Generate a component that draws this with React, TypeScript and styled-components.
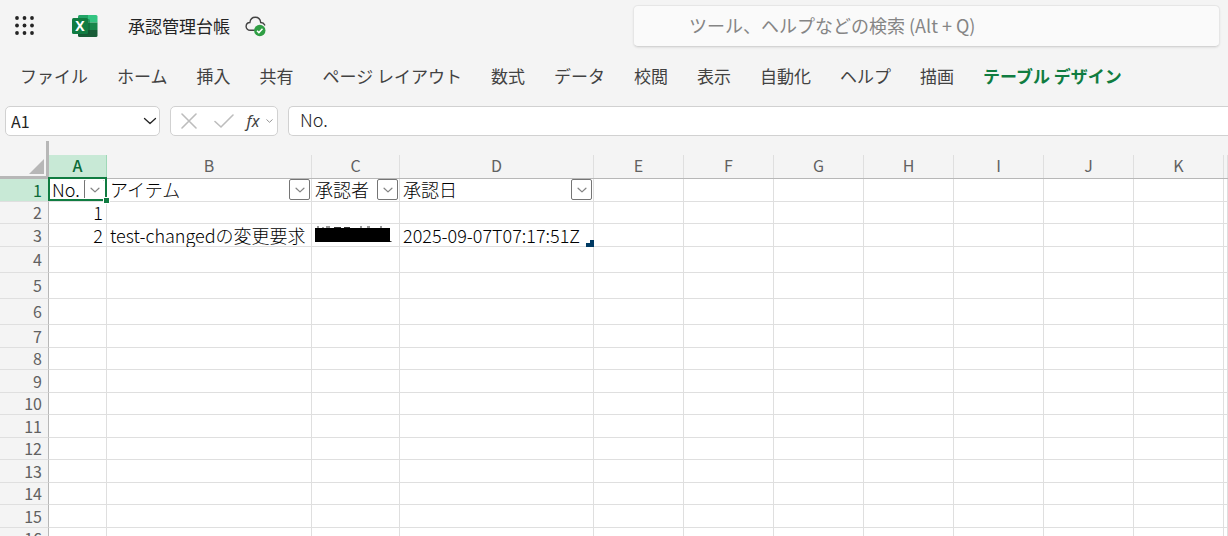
import React from "react";
import styled, { createGlobalStyle, css } from "styled-components";

const GREEN = "#107c41";
const HEAD_BG = "#f4f4f4";
const LINE = "#dfdfdf";
const DARK_LINE = "#b7b7b7";

const GlobalStyle = createGlobalStyle`
  *, *::before, *::after { box-sizing: border-box; }
  body {
    margin: 0;
    background: ${HEAD_BG};
    font-family: "Noto Sans CJK JP", "Noto Sans", sans-serif;
    color: #242424;
  }
  button, input {
    font: inherit;
    color: inherit;
    margin: 0;
    padding: 0;
    border: 0;
    background: none;
    outline: none;
  }
`;

const Page = styled.div`
  display: flex;
  flex-direction: column;
  height: 100vh;
  overflow: hidden;
`;

const TopBar = styled.header`
  display: grid;
  grid-template-columns: 633fr 595fr;
  align-items: center;
  padding-top: 5px;
`;

const Brand = styled.div`
  display: flex;
  align-items: center;
  padding-left: 14px;
`;

const IconButton = styled.button`
  display: flex;
  align-items: center;
  justify-content: center;
`;

const ExcelLogo = styled.svg`
  margin-left: 36px;
`;

const FileName = styled.h1`
  margin: 0 15px 0 30px;
  font-size: 17px;
  line-height: 24px;
  font-weight: 400;
`;

const Search = styled.div`
  margin-right: 8px;
  padding: 0 16px 0 55px;
  border: 1px solid #e6e6e6;
  border-bottom-color: #d4d4d4;
  border-radius: 5px;
  background: #fafafa;
  box-shadow: 0 1px 2px rgba(0, 0, 0, 0.08);

  input {
    display: block;
    width: 100%;
    height: 40px;
    padding-bottom: 2px;
    font-size: 18px;
  }
  input::placeholder {
    color: #858585;
    opacity: 1;
  }
`;

const Tabs = styled.nav`
  display: flex;
  gap: 29px;
  padding: 17px 0 18px 20px;
`;

const Tab = styled.button<{ $active?: boolean }>`
  flex: none;
  font-size: 17px;
  line-height: 24px;
  white-space: nowrap;
  color: ${(p) => (p.$active ? GREEN : "#424242")};
  font-weight: ${(p) => (p.$active ? 700 : 400)};
`;

const FormulaRow = styled.div`
  display: flex;
  padding-left: 5px;
`;

const box = css`
  display: flex;
  align-items: center;
  height: 30px;
  background: #fff;
  border: 1px solid #d1d1d1;
  border-radius: 5px;
`;

const NameBox = styled.div`
  ${box}
  width: 155px;
  padding: 0 2px 0 5px;
  input {
    flex: 1;
    min-width: 0;
    font-size: 16px;
    line-height: 24px;
  }
`;

const FormulaTools = styled.div`
  ${box}
  display: grid;
  grid-template-columns: 32px 37px 22px 11px;
  width: 108px;
  margin: 0 10px;
  padding: 0 2px;
`;

const FxLabel = styled.span`
  font-family: "Noto Sans", sans-serif;
  font-style: italic;
  font-size: 16px;
  line-height: 20px;
  color: #424242;
`;

const FormulaInput = styled.div`
  ${box}
  flex: 1;
  align-items: flex-start;
  border-right: 0;
  border-radius: 5px 0 0 5px;
  input {
    width: 100%;
    padding-left: 11px;
    font-size: 18px;
    font-weight: 300;
    line-height: 24px;
    height: 24px;
  }
`;

const SheetArea = styled.main`
  flex: 1;
  min-height: 0;
  padding-top: 5px;
  overflow: hidden;
`;

const Sheet = styled.table`
  width: 100%;
  table-layout: fixed;
  border-collapse: separate;
  border-spacing: 0;
`;

const Corner = styled.th`
  padding: 0;
  height: 38px;
  vertical-align: bottom;
  border-right: 3px solid ${DARK_LINE};
  border-bottom: 3px solid ${DARK_LINE};

  button {
    display: block;
    margin: 0 2px 2px auto;
  }
`;

const ColHead = styled.th<{ $active?: boolean }>`
  padding: 14px 0 0;
  border-bottom: 1px solid ${DARK_LINE};
  font-size: 16px;
  font-weight: ${(p) => (p.$active ? 500 : 400)};
  color: ${(p) => (p.$active ? "#0b6a37" : "#616161")};

  span {
    display: block;
    height: 23px;
    line-height: 21px;
    border-right: 1px solid ${(p) => (p.$active ? "#9fd8b7" : LINE)};
    background: ${(p) => (p.$active ? "#c8e9d6" : "transparent")};
  }
`;

const SheetRow = styled.tr<{ $height: number }>`
  height: ${(p) => p.$height}px;
`;

const RowHead = styled.th<{ $active?: boolean }>`
  padding: 0 6px 1px 0;
  text-align: right;
  font-size: 16px;
  line-height: 20px;
  font-weight: 400;
  color: ${(p) => (p.$active ? "#0b6a37" : "#616161")};
  background: ${(p) => (p.$active ? "#c8e9d6" : HEAD_BG)};
  border-right: 1px solid ${DARK_LINE};
  border-bottom: 1px solid ${LINE};
`;

const Cell = styled.td<{ $right?: boolean }>`
  position: relative;
  padding: 0 3px 1px;
  text-align: ${(p) => (p.$right ? "right" : "left")};
  font-size: 18px;
  line-height: 20px;
  font-weight: 300;
  color: #000;
  white-space: nowrap;
  background: #fff;
  border-right: 1px solid ${LINE};
  border-bottom: 1px solid ${LINE};
`;

const HeadingCell = styled(Cell)`
  padding: 0 1px 0 3px;
`;

const Heading = styled.div`
  display: flex;
  align-items: flex-start;
  justify-content: space-between;
  height: 22px;
`;

const FilterButton = styled.button`
  display: flex;
  align-items: center;
  justify-content: center;
  width: 21px;
  height: 21px;
  border: 1px solid #757575;
  border-radius: 2px;
  background: #fff;
`;

const Selection = styled.div`
  position: absolute;
  inset: -2px -1px 0 -1px;
  border: 2px solid ${GREEN};
  box-shadow: inset 0 0 0 1px #fff;
  pointer-events: none;

  &::after {
    content: "";
    position: absolute;
    right: -5px;
    bottom: -5px;
    width: 7px;
    height: 7px;
    border: 1px solid #fff;
    background: ${GREEN};
  }
`;

const SelectedHeadingCell = styled(HeadingCell)`
  z-index: 1;
`;

const TableCorner = styled.svg`
  position: absolute;
  right: -1px;
  bottom: -1px;
`;

const Redacted = styled.svg`
  display: block;
`;

type ChevronProps = { width: number; height: number; color: string };

const Chevron = ({ width, height, color }: ChevronProps) => (
  <svg width={width} height={height} viewBox="0 0 14 8" fill="none" aria-hidden="true">
    <path
      d="M1.5 1.5 7 6.600l5.500-5.100"
      stroke={color}
      strokeWidth={width > 10 ? 1.3 : 1.8}
      strokeLinecap="round"
      strokeLinejoin="round"
    />
  </svg>
);

const Waffle = () => (
  <svg width="22" height="22" viewBox="0 0 22 22" fill="#242424" aria-hidden="true">
    {[3, 10.5, 18].map((y) => [3, 10.5, 18].map((x) => <circle key={`${x}-${y}`} cx={x} cy={y} r="1.9" />))}
  </svg>
);

const CloudSaved = () => (
  <svg width="22" height="23" viewBox="0 0 22 23" fill="none" aria-hidden="true">
    <path
      d="M9.500 15.300H5.200A4 4 0 0 1 1.100 11.400a4 4 0 0 1 3.800-3.900C5.300 4.200 7.600 2.300 10.300 2.300s5 1.900 5.400 5.200c2 .1 3.400 1.100 4 2.500"
      stroke="#424242"
      strokeWidth="1.4"
      strokeLinecap="round"
    />
    <circle cx="14.800" cy="15.500" r="5.700" fill="#2f9e44" />
    <path d="m12 15.700 1.900 1.900 3.600-3.800" stroke="#fff" strokeWidth="1.5" />
  </svg>
);

const tabs = [
  "ファイル", "ホーム", "挿入", "共有", "ページ レイアウト", "数式", "データ",
  "校閲", "表示", "自動化", "ヘルプ", "描画", "テーブル デザイン",
];

const columns = [
  { name: "A", width: 58 },
  { name: "B", width: 205 },
  { name: "C", width: 88 },
  { name: "D", width: 194 },
  ...["E", "F", "G", "H", "I", "J", "K"].map((name) => ({ name, width: 90 })),
];

const rowHeights = [23, 22, 23, 26, 26, 26, 23, 22, 23, 22, 23, 22, 23, 22, 23, 22];

const headings = ["No.", "アイテム", "承認者", "承認日"];

const RedactedName = () => (
  <Redacted width="77" height="17" viewBox="0 0 77 17" role="img" aria-label="非表示">
    <path d="M3 0v3M8 1v2M11 1h4M19 1.500h7M29 1.500h6M46 0v3M52 1h3M66 0v3M75 15.500h1.500" stroke="#333" fill="none" />
    <rect y="2" width="75" height="14" fill="#000" />
  </Redacted>
);

function renderCell(row: number, col: number) {
  if (row === 0 && col < headings.length) {
    const HeadCell = col === 0 ? SelectedHeadingCell : HeadingCell;
    return (
      <HeadCell key={col}>
        <Heading>
          {headings[col]}
          <FilterButton aria-label={`${headings[col]} フィルター`}>
            <Chevron width={10} height={6} color="#858585" />
          </FilterButton>
        </Heading>
        {col === 0 && <Selection />}
      </HeadCell>
    );
  }
  if (col === 0 && (row === 1 || row === 2)) {
    return <Cell key={col} $right>{row}</Cell>;
  }
  if (row === 2 && col === 1) return <Cell key={col}>test-changedの変更要求</Cell>;
  if (row === 2 && col === 2) return <Cell key={col}><RedactedName /></Cell>;
  if (row === 2 && col === 3) {
    return (
      <Cell key={col}>
        2025-09-07T07:17:51Z
        <TableCorner width="8" height="7" viewBox="0 0 8 7" aria-hidden="true">
          <path d="M4 0h4v7H0V3h4z" fill="#003a63" />
        </TableCorner>
      </Cell>
    );
  }
  return <Cell key={col} />;
}

export default function App() {
  return (
    <Page>
      <GlobalStyle />
      <TopBar>
        <Brand>
          <IconButton aria-label="アプリ起動ツール"><Waffle /></IconButton>
          <ExcelLogo width="26" height="24" viewBox="0 0 26 24" aria-label="Excel">
            <path d="M7.500 1H16v7.500H6V2.500A1.500 1.500 0 0 1 7.500 1z" fill="#21a366" />
            <path d="M16 1h8a1.500 1.500 0 0 1 1.500 1.500v6H16z" fill="#33c481" />
            <path d="M6 8.500h10V16H6z" fill="#107c41" />
            <path d="M16 8.500h9.500V16H16z" fill="#17864a" />
            <path d="M6 16h19.500v5.500A1.500 1.500 0 0 1 24 23H7.500A1.500 1.500 0 0 1 6 21.500z" fill="#185c37" />
            <path d="M6 5h10.500a1.500 1.500 0 0 1 1.500 1.500V19a1.500 1.500 0 0 1-1.500 1.500H6z" fill="#0b4f2a" opacity=".4" />
            <rect y="4" width="16" height="16" rx="1.500" fill="#107c41" />
            <text x="8" y="17" textAnchor="middle" fontFamily="Open Sans, sans-serif" fontSize="14" fontWeight="700" fill="#fff">X</text>
          </ExcelLogo>
          <FileName>承認管理台帳</FileName>
          <IconButton aria-label="保存済み"><CloudSaved /></IconButton>
        </Brand>
        <Search>
          <input type="search" aria-label="検索" placeholder="ツール、ヘルプなどの検索 (Alt + Q)" />
        </Search>
      </TopBar>

      <Tabs>
        {tabs.map((t) => (
          <Tab key={t} $active={t === "テーブル デザイン"}>{t}</Tab>
        ))}
      </Tabs>

      <FormulaRow>
        <NameBox>
          <input aria-label="名前ボックス" defaultValue="A1" />
          <IconButton aria-label="名前の一覧"><Chevron width={14} height={8} color="#242424" /></IconButton>
        </NameBox>
        <FormulaTools>
          <IconButton aria-label="キャンセル">
            <svg width="16" height="16" viewBox="0 0 16 16" fill="none" stroke="#bdbdbd" strokeWidth="1.600" strokeLinecap="round">
              <path d="m1 1 14 14M15 1 1 15" />
            </svg>
          </IconButton>
          <IconButton aria-label="入力">
            <svg width="20" height="16" viewBox="0 0 20 16" fill="none" stroke="#bdbdbd" strokeWidth="1.600" strokeLinecap="round">
              <path d="m1 8.500 6 5.500L19 2" />
            </svg>
          </IconButton>
          <IconButton aria-label="関数の挿入"><FxLabel>fx</FxLabel></IconButton>
          <IconButton aria-label="関数の一覧"><Chevron width={7} height={4} color="#8a8a8a" /></IconButton>
        </FormulaTools>
        <FormulaInput>
          <input aria-label="数式バー" defaultValue="No." />
        </FormulaInput>
      </FormulaRow>

      <SheetArea>
        <Sheet>
          <colgroup>
            <col width={49} />
            {columns.map((c) => <col key={c.name} width={c.width} />)}
            <col />
          </colgroup>
          <thead>
            <tr>
              <Corner>
                <button aria-label="すべて選択">
                  <svg width="15" height="15" viewBox="0 0 15 15" display="block"><path d="M15 0v15H0z" fill={DARK_LINE} /></svg>
                </button>
              </Corner>
              {columns.map((c, i) => (
                <ColHead key={c.name} scope="col" $active={i === 0}><span>{c.name}</span></ColHead>
              ))}
              <ColHead as="td"><span /></ColHead>
            </tr>
          </thead>
          <tbody>
            {rowHeights.map((height, row) => (
              <SheetRow key={row} $height={height}>
                <RowHead scope="row" $active={row === 0}>{row + 1}</RowHead>
                {columns.map((_, col) => renderCell(row, col))}
                <Cell />
              </SheetRow>
            ))}
          </tbody>
        </Sheet>
      </SheetArea>
    </Page>
  );
}
